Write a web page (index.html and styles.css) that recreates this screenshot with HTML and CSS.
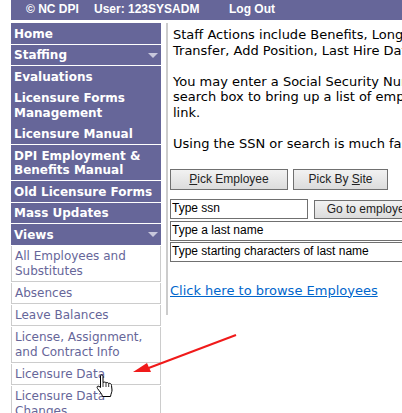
FILE: index.html
```html
<!DOCTYPE html>
<html lang="en">
<head>
    <meta charset="UTF-8">
    <meta name="viewport" content="width=device-width, initial-scale=1.0">
    <title>Staff Actions</title>
    <link rel="stylesheet" href="styles.css">
</head>
<body>
    <div id="header">
        <span class="copy">&copy; NC DPI</span>
        <span class="user">User: 123SYSADM</span>
        <a href="#" class="logout">Log Out</a>
    </div>

    <div id="page">
        <div id="nav">
            <a href="#" class="item">Home</a>
            <a href="#" class="item drop">Staffing</a>
            <div class="group">
                <a href="#" class="item">Evaluations</a>
                <a href="#" class="item">Licensure Forms Management</a>
                <a href="#" class="item">Licensure Manual</a>
            </div>
            <a href="#" class="item">DPI Employment &amp; Benefits Manual</a>
            <a href="#" class="item">Old Licensure Forms</a>
            <a href="#" class="item">Mass Updates</a>
            <a href="#" class="item drop">Views</a>
            <a href="#" class="sub">All Employees and Substitutes</a>
            <a href="#" class="sub">Absences</a>
            <a href="#" class="sub">Leave Balances</a>
            <a href="#" class="sub">License, Assignment, and Contract Info</a>
            <a href="#" class="sub">Licensure Data</a>
            <a href="#" class="sub">Licensure Data Changes</a>
        </div>

        <div id="content">
            <p>Staff Actions include Benefits, Longevity,<br>Transfer, Add Position, Last Hire Date</p>
            <p>You may enter a Social Security Number<br>search box to bring up a list of employees<br>link.</p>
            <p>Using the SSN or search is much faster</p>

            <div class="pick-row">
                <button class="btn pick-emp"><u>P</u>ick Employee</button>
                <button class="btn pick-site">Pick By <u>S</u>ite</button>
            </div>

            <div class="search">
                <div class="ssn-row">
                    <input class="box ssn" type="text" value="Type ssn">
                    <button class="btn go">Go to employee</button>
                </div>
                <input class="box wide" type="text" value="Type a last name">
                <input class="box wide" type="text" value="Type starting characters of last name">
            </div>

            <a href="#" class="browse">Click here to browse Employees</a>
        </div>
    </div>

    <!-- red arrow drawn over the screenshot -->
    <svg class="arrow" width="110" height="45" viewBox="0 0 110 45">
        <path d="M104 1 L14 35" stroke="#f01a1a" stroke-width="2" fill="none"/>
        <path d="M1 38 L15 29 L19 38 Z" fill="#f01a1a"/>
    </svg>

    <!-- hand cursor -->
    <svg class="hand" width="18" height="24" viewBox="0 0 18 24">
        <path d="M4.5 1.5 C5.5 .5 7 1 7 2.5 L7 8.5 C8 7.8 9.5 8 10 8.8 C11 8.2 12.3 8.6 12.7 9.5 C13.8 9 15.5 9.6 15.5 11.5 L16 16 C16 18 15 19.5 14.5 22.5 L6.5 22.5 C6 20 4 18 1.5 14.5 C.5 13 1.5 11.5 3 12.3 L4.5 13.5 Z" fill="#fff" stroke="#000" stroke-width="1"/>
        <path d="M7 8.5 V13 M10 8.8 V13 M12.7 9.5 V13" stroke="#000" stroke-width=".8" fill="none"/>
    </svg>
</body>
</html>
```

FILE: styles.css
```css
html, body {
    margin: 0;
    padding: 0;
    height: 100%;
    overflow: hidden;
    background-color: #fff;
}
body {
    position: relative;
    font-family: "DejaVu Sans", Verdana, sans-serif;
    font-size: 13px;
    color: #000;
}
#header {
    margin-left: 11px;
    height: 20px;
    background-color: #666699;
    color: #fff;
    font-family: "Liberation Sans", Arial, sans-serif;
    font-size: 12px;
    font-weight: bold;
    line-height: 18px;
    display: flex;
    padding-left: 15px;
    white-space: nowrap;
}
.copy {
    width: 68px;
}
.user {
    width: 135px;
}
.logout {
    color: #fff;
    text-decoration: none;
}
#page {
    display: flex;
    margin: 3px 0 0 11px;
}
#nav {
    width: 150px;
    flex-shrink: 0;
    display: flex;
    flex-direction: column;
    gap: 1px;
}
.item {
    display: block;
    background-color: #666699;
    color: #fff;
    font-size: 12px;
    font-weight: bold;
    line-height: 14.5px;
    padding: 3.5px 3px 2.5px 3px;
    text-decoration: none;
}
.group {
    background-color: #666699;
    display: flex;
    flex-direction: column;
    gap: 1px;
}
.drop {
    position: relative;
}
.drop::after {
    content: "";
    position: absolute;
    right: 3px;
    top: 8px;
    border-left: 5px solid transparent;
    border-right: 5px solid transparent;
    border-top: 5px solid #c8c8dc;
}
.sub {
    display: block;
    border: 1px solid #ccc;
    border-top-width: 0;
    color: #666699;
    font-size: 12px;
    line-height: 15px;
    padding: 3.5px 3px 1.5px 3px;
    text-decoration: none;
}
#content {
    margin-left: 5px;
    border-left: 2px solid #ccc;
    padding: 4px 0 0 2px;
    box-sizing: border-box;
    height: 292px;
    white-space: nowrap;
    flex-shrink: 0;
}
#content p {
    margin: 0 0 15.5px 0;
    padding-left: 3px;
    line-height: 15.5px;
}
.pick-row {
    display: flex;
    gap: 5px;
    margin-top: 17.5px;
}
.btn {
    font-family: "Liberation Sans", Arial, sans-serif;
    font-size: 12px;
    height: 21px;
    padding: 0;
    color: #222;
    border: 1px solid #707070;
    background: linear-gradient(#f2f2f2, #dcdcdc);
}
.pick-emp {
    width: 118px;
}
.pick-site {
    width: 95px;
}
.search {
    margin-top: 9px;
    display: flex;
    flex-direction: column;
    gap: 1px;
}
.ssn-row {
    display: flex;
    gap: 6px;
    margin-bottom: 1px;
}
.box {
    font-family: "Liberation Sans", Arial, sans-serif;
    font-size: 12px;
    height: 20px;
    box-sizing: border-box;
    border: 1px solid #707070;
    padding: 0 1px 2px 1px;
    color: #000;
}
.ssn {
    width: 138px;
}
.go {
    width: 110px;
    margin-top: 1px;
    height: 19px;
}
.wide {
    width: 280px;
}
.browse {
    display: block;
    margin-top: 21px;
    color: #0066cc;
    line-height: 16px;
}
.arrow {
    position: absolute;
    left: 132px;
    top: 334px;
}
.hand {
    position: absolute;
    left: 96px;
    top: 374px;
}
```
